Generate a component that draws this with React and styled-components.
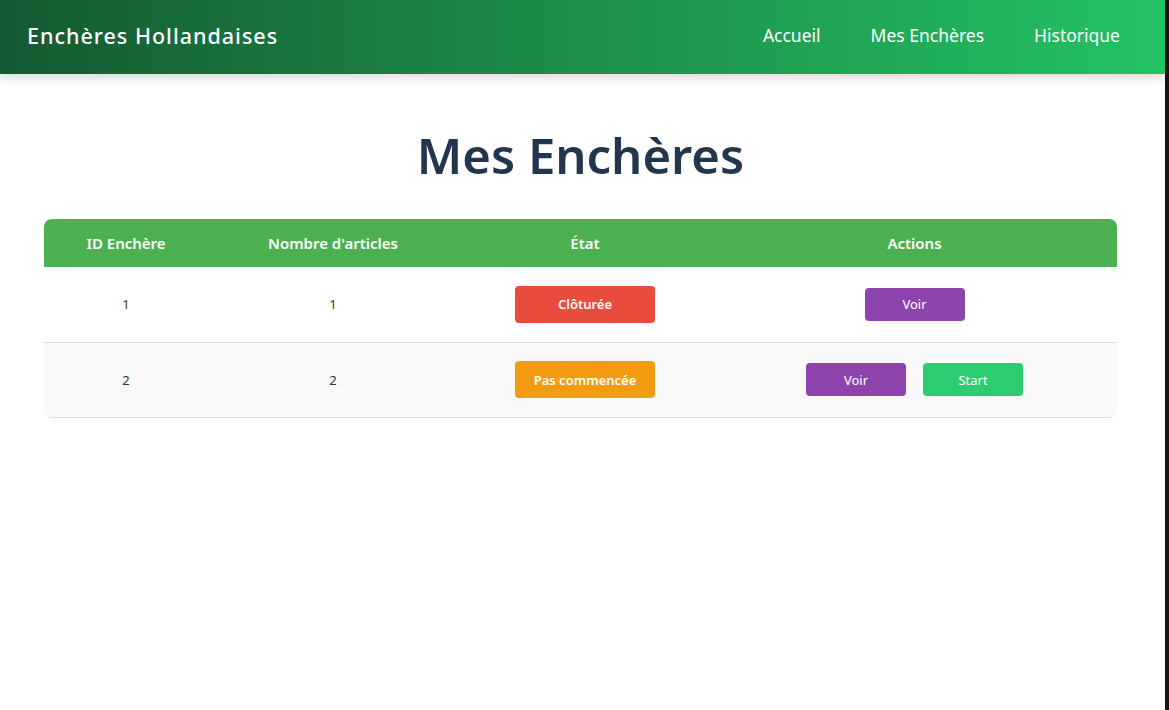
import React from 'react';
import styled, { createGlobalStyle } from 'styled-components';

const GlobalStyle = createGlobalStyle`
  * { box-sizing: border-box; }
  body {
    margin: 0;
    background: #ffffff;
    font-family: "Noto Sans", "Open Sans", sans-serif;
  }
`

const Screen = styled.div`
  display: grid;
  grid-template-columns: 1165px 1fr;
  min-height: 710px;
`

const Page = styled.div`
  background: #ffffff;
`

const SideStrip = styled.div`
  background: #141414;
`

const NavBar = styled.header`
  height: 74px;
  display: flex;
  align-items: center;
  justify-content: space-between;
  padding: 0 45px 4px 27px;
  background: linear-gradient(90deg, #145a32 0%, #1d8f4c 50%, #23c263 100%);
  box-shadow: 0 4px 10px rgba(0, 0, 0, 0.15);
`

const Brand = styled.div`
  color: #ffffff;
  font-size: 21.5px;
  font-weight: 500;
  letter-spacing: 1px;
`

const NavLinks = styled.nav`
  display: flex;
  gap: 50px;
`

const NavLink = styled.a`
  color: #ffffff;
  font-size: 17.5px;
  text-decoration: none;
`

const Main = styled.main`
  padding: 0 48px 0 44px;
`

const Title = styled.h1`
  margin: 50px 0 33px;
  text-align: center;
  color: #22374d;
  font-size: 49px;
  font-weight: 600;
  line-height: 62px;
`

const Table = styled.table`
  width: 1073px;
  border-collapse: collapse;
  border-radius: 8px;
  overflow: hidden;
`

const HeadCell = styled.th`
  width: ${p => p.$w}px;
  height: 48px;
  padding: 0;
  background: #4caf50;
  color: #ffffff;
  font-size: 15px;
  font-weight: 600;
  text-align: center;
`

const Row = styled.tr`
  background: ${p => (p.$alt ? '#f9f9f9' : '#ffffff')};
  border-bottom: 1px solid #dddddd;
`

const Cell = styled.td`
  height: 75px;
  padding: 0;
  text-align: center;
  color: #333333;
  font-size: 13px;
`

const Badge = styled.span`
  display: inline-flex;
  align-items: center;
  justify-content: center;
  width: 140px;
  height: 37px;
  border-radius: 4px;
  background: ${p => p.$color};
  color: #ffffff;
  font-size: 13px;
  font-weight: 600;
`

const Actions = styled.div`
  display: flex;
  justify-content: center;
  gap: 17px;
`

const ActionButton = styled.button`
  width: 100px;
  height: 33px;
  border: none;
  border-radius: 4px;
  background: ${p => p.$color};
  color: #ffffff;
  font-family: inherit;
  font-size: 13px;
  cursor: pointer;
`

const auctions = [
  { id: 1, count: 1, state: 'Clôturée', color: '#e74c3c', canStart: false },
  { id: 2, count: 2, state: 'Pas commencée', color: '#f39c12', canStart: true },
]

const App = () => {
  return (
    <Screen>
      <GlobalStyle />
      <Page>
        <NavBar>
          <Brand>Enchères Hollandaises</Brand>
          <NavLinks>
            <NavLink href="#">Accueil</NavLink>
            <NavLink href="#">Mes Enchères</NavLink>
            <NavLink href="#">Historique</NavLink>
          </NavLinks>
        </NavBar>
        <Main>
          <Title>Mes Enchères</Title>
          <Table>
            <thead>
              <tr>
                <HeadCell $w={164}>ID Enchère</HeadCell>
                <HeadCell $w={250}>Nombre d'articles</HeadCell>
                <HeadCell $w={254}>État</HeadCell>
                <HeadCell $w={405}>Actions</HeadCell>
              </tr>
            </thead>
            <tbody>
              {auctions.map((a, i) => (
                <Row key={a.id} $alt={i % 2 === 1}>
                  <Cell>{a.id}</Cell>
                  <Cell>{a.count}</Cell>
                  <Cell>
                    <Badge $color={a.color}>{a.state}</Badge>
                  </Cell>
                  <Cell>
                    <Actions>
                      <ActionButton $color="#8e44ad">Voir</ActionButton>
                      {a.canStart && <ActionButton $color="#2ecc71">Start</ActionButton>}
                    </Actions>
                  </Cell>
                </Row>
              ))}
            </tbody>
          </Table>
        </Main>
      </Page>
      <SideStrip />
    </Screen>
  )
}

export default App;
